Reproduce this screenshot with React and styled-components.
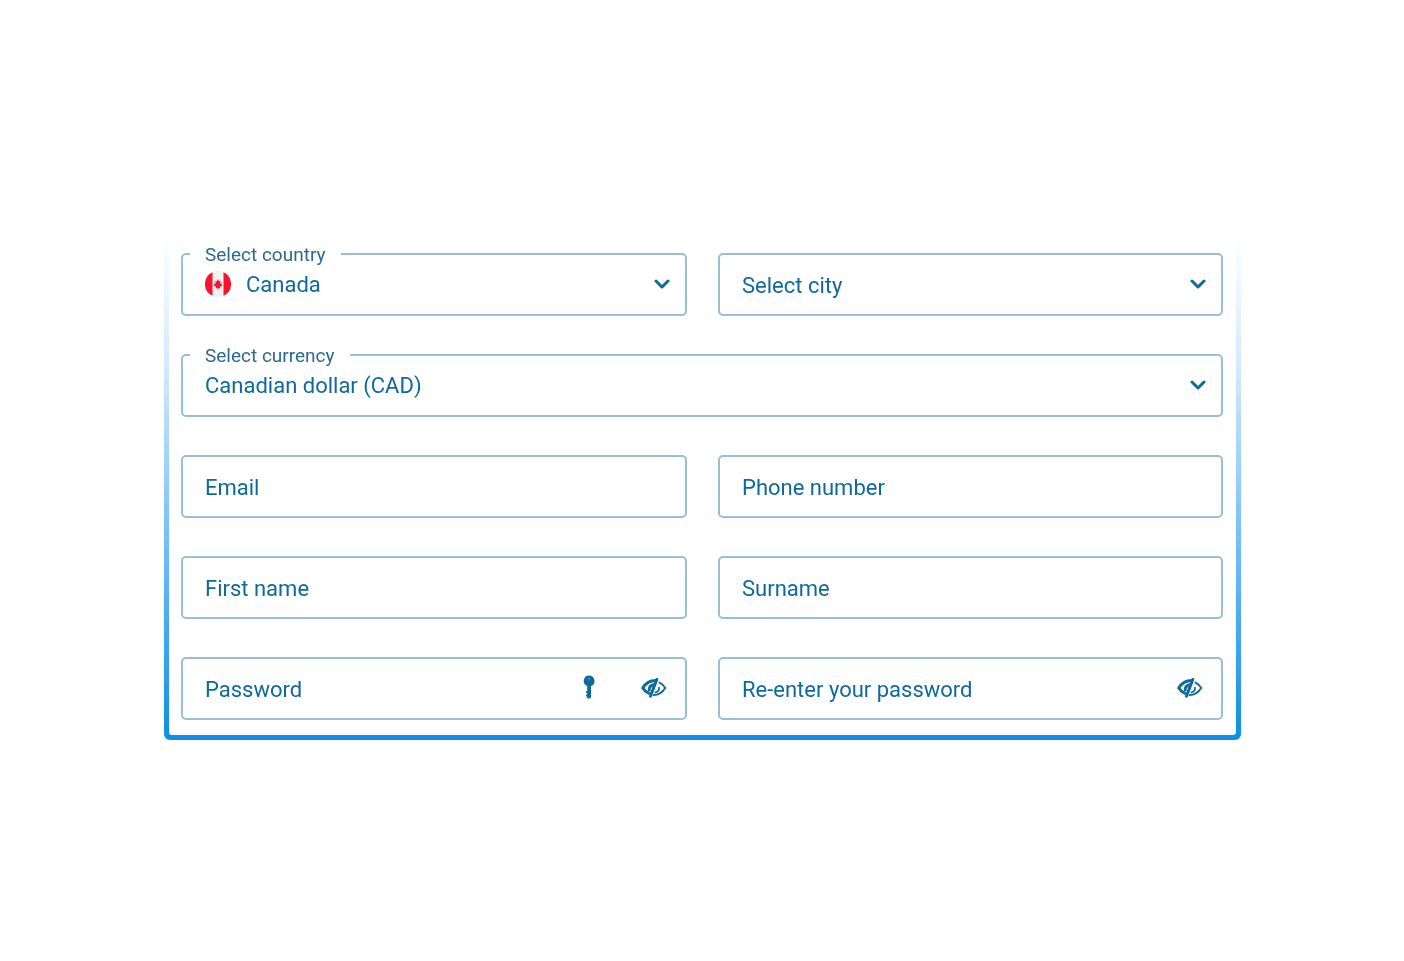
import React from "react";
import styled, { createGlobalStyle } from "styled-components";

const Global = createGlobalStyle`
  html, body { margin: 0; padding: 0; background: #fff; }
  body { font-family: Roboto, "Liberation Sans", sans-serif; }
`;

const Page = styled.div`
  width: 1404px;
  height: 961px;
  padding-top: 235px;
  box-sizing: border-box;
`;

const Frame = styled.div`
  width: 1077px;
  height: 505px;
  margin-left: 164px;
  box-sizing: border-box;
  padding: 0 5px 5px;
  border-radius: 0 0 6px 6px;
  background: linear-gradient(180deg, #ffffff 0%, #d3eafd 26%, #76c0f8 60%, #0b8fe9 100%);
  filter: blur(0.35px);
`;

const Panel = styled.form`
  height: 100%;
  box-sizing: border-box;
  background: #fff;
  border-radius: 0 0 3px 3px;
  padding: 18px 13px 0 12px;
  display: grid;
  grid-template-columns: 506px 505px;
  grid-auto-rows: 63px;
  column-gap: 31px;
  row-gap: 38px;
`;

const Field = styled.div`
  position: relative;
  grid-column: ${(p) => (p.$wide ? "1 / -1" : "auto")};
  display: flex;
  align-items: center;
  box-sizing: border-box;
  padding: 0 15px 0 22px;
  border: 2px solid #98bfd6;
  border-radius: 5px;
  background: #fff;
`;

const FloatLabel = styled.span`
  position: absolute;
  top: -11px;
  left: 7px;
  padding: 0 15px;
  background: #fff;
  font-size: 19px;
  line-height: 22px;
  color: #2c6a8e;
`;

const Value = styled.span`
  font-size: 22px;
  line-height: 28px;
  color: #0f6a9c;
  flex: 1;
  white-space: nowrap;
  margin-top: ${(p) => (p.$labelled ? "0" : "3px")};
`;

const Flag = styled.svg`
  width: 26px;
  height: 26px;
  margin: -1px 15px 0 0;
  flex: none;
`;

const Chevron = styled.svg`
  width: 16px;
  height: 10px;
  margin: -1px 0 0 0;
  flex: none;
`;

const KeyIcon = styled.svg`
  width: 12px;
  height: 24px;
  margin: -3px 46px 0 0;
  flex: none;
`;

const EyeIcon = styled.svg`
  width: 26px;
  height: 20px;
  margin: -2px 3px 0 0;
  flex: none;
`;

const Caret = () => (
  <Chevron viewBox="0 0 16 10" fill="none">
    <path d="M2 2l6 6 6-6" stroke="#0f6a9c" strokeWidth="3" strokeLinecap="round" strokeLinejoin="round" />
  </Chevron>
);

const CanadaFlag = () => (
  <Flag viewBox="0 0 26 26">
    <circle cx="13" cy="13" r="13" fill="#f1f1f1" />
    <path d="M7.5 1.2A13 13 0 0 0 7.5 24.8Z" fill="#f5132f" />
    <path d="M18.5 1.2A13 13 0 0 1 18.5 24.8Z" fill="#f5132f" />
    <path d="M13 8l1.2 2.4 1.5-.6-.5 3 1.8-.6-.5 1.6.9.6-2.6 1.7.3 1.2H13.3v1.8h-.6v-1.8h-1.8l.3-1.2-2.6-1.7.9-.6-.5-1.6 1.8.6-.5-3 1.5.6Z" fill="#f5132f" />
  </Flag>
);

const Key = () => (
  <KeyIcon viewBox="0 0 12 24">
    <path
      d="M6 .5a5.5 5.5 0 0 1 2 10.6V22.4L6.6 23.6H4.2V21.4H3V19.6H4.2V18H3V16.2H4.2V11.1A5.5 5.5 0 0 1 6 .5Z"
      fill="#0f6a9c"
    />
    <circle cx="6" cy="4" r="1.2" fill="#3f8cb8" />
  </KeyIcon>
);

const Eye = () => (
  <EyeIcon viewBox="0 0 26 20" fill="none">
    <path d="M14.5 2.6C8.5 2.6 4 6.4 1.8 10c1.2 2 3.2 4 5.8 5.2" stroke="#0f6a9c" strokeWidth="3" strokeLinecap="round" />
    <path d="M13.6 6.4C10.5 6.6 7.8 9 8.2 12" stroke="#0f6a9c" strokeWidth="3" strokeLinecap="round" />
    <path d="M15.8 1.5L9.4 18.2" stroke="#0f6a9c" strokeWidth="3" strokeLinecap="round" />
    <path d="M18.5 4.6c2.4 1.2 4.4 3.2 5.7 5.4-2.4 3.8-6.6 7-11.6 7" stroke="#0f6a9c" strokeWidth="1.9" strokeLinecap="round" />
    <path d="M18 9.5c.2 2.4-1.4 4.4-3.6 4.8" stroke="#0f6a9c" strokeWidth="1.7" strokeLinecap="round" />
  </EyeIcon>
);

export default function App() {
  return (
    <Page>
      <Global />
      <Frame>
        <Panel>
          <Field $labelled>
            <FloatLabel>Select country</FloatLabel>
            <CanadaFlag />
            <Value $labelled>Canada</Value>
            <Caret />
          </Field>
          <Field>
            <Value>Select city</Value>
            <Caret />
          </Field>
          <Field $wide $labelled>
            <FloatLabel>Select currency</FloatLabel>
            <Value $labelled>Canadian dollar (CAD)</Value>
            <Caret />
          </Field>
          <Field><Value>Email</Value></Field>
          <Field><Value>Phone number</Value></Field>
          <Field><Value>First name</Value></Field>
          <Field><Value>Surname</Value></Field>
          <Field>
            <Value>Password</Value>
            <Key />
            <Eye />
          </Field>
          <Field>
            <Value>Re-enter your password</Value>
            <Eye />
          </Field>
        </Panel>
      </Frame>
    </Page>
  );
}
